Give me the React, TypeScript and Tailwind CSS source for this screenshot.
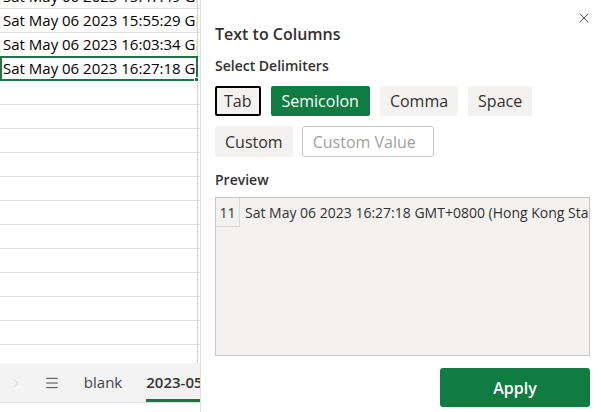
import { X, ChevronRight, Menu } from 'lucide-react';

const rows = [
  'Sat May 06 2023 15:47:49 GMT+0800 (Hong Kong Standard Time)',
  'Sat May 06 2023 15:55:29 GMT+0800 (Hong Kong Standard Time)',
  'Sat May 06 2023 16:03:34 GMT+0800 (Hong Kong Standard Time)',
  'Sat May 06 2023 16:27:18 GMT+0800 (Hong Kong Standard Time)',
  '', '', '', '', '', '', '', '', '', '', '', '',
];

const delimiters = ['Tab', 'Semicolon', 'Comma', 'Space'];

export default function App() {
  return (
    <div className="flex h-[412px] w-[601px] overflow-hidden bg-white text-[#323130] font-['Open_Sans',sans-serif]">
      {/* sheet */}
      <div className="flex w-[200px] shrink-0 flex-col">
        <div className="flex-1 overflow-hidden">
          <div className="-mt-[15px]">
            {rows.map((text, i) => (
              <div key={i} className="flex h-[24px] border-b border-[#e1e1e1]">
                <div
                  className={
                    i === 3
                      ? 'relative w-[198px] border-2 border-[#217346] -mt-px h-[25px] pl-[1px] whitespace-nowrap text-[15px] leading-[21px] text-black'
                      : 'w-[198px] border-r border-[#d4d4d4] pl-[3px] overflow-hidden whitespace-nowrap text-[15px] leading-[23px] text-black'
                  }
                >
                  <div className="overflow-hidden">{text}</div>
                  {i === 3 && (
                    <span className="absolute -right-[3px] -bottom-[3px] h-[5px] w-[5px] bg-[#217346] border border-white" />
                  )}
                </div>
              </div>
            ))}
          </div>
        </div>
        <div className="flex h-[40px] items-center bg-[#f3f3f3] border-b border-[#e1e1e1] text-[15px]">
          <ChevronRight className="ml-[9px] h-[14px] w-[14px] text-[#c8c8c8]" strokeWidth={1.5} />
          <Menu className="ml-[21px] h-[16px] w-[16px] text-[#444]" strokeWidth={1.5} />
          <span className="ml-[24px] text-[#444]">blank</span>
          <span className="ml-[24px] h-full flex items-center border-b-[3px] border-[#217346] pt-[3px] font-semibold text-[#333] whitespace-nowrap overflow-hidden w-[54px]">2023-05</span>
        </div>
        <div className="h-[9px]" />
      </div>

      {/* panel */}
      <div className="relative flex min-w-0 flex-1 flex-col border-l border-[#e1e1e1] pl-[14px] pr-[11px]">
        <button className="absolute right-[9px] top-[10px] text-[#323130]">
          <X className="h-[16px] w-[16px]" strokeWidth={1.25} />
        </button>
        <h2 className="mt-[23px] text-[16px] font-semibold leading-[22px]">Text to Columns</h2>
        <div className="mt-[11px] text-[14px] font-semibold leading-[20px]">Select Delimiters</div>
        <div className="mt-[10px] flex gap-[10px]">
          {delimiters.map((d) => (
            <button
              key={d}
              className={
                d === 'Tab'
                  ? 'h-[30px] rounded-[2px] border-2 border-black bg-[#f3f2f1] px-[7px] text-[16px]'
                  : d === 'Semicolon'
                    ? 'h-[30px] rounded-[2px] bg-[#107c41] px-[11px] text-[16px] text-white'
                    : 'h-[30px] rounded-[2px] bg-[#f3f2f1] px-[10px] text-[16px]'
              }
            >
              {d}
            </button>
          ))}
        </div>
        <div className="mt-[10px] flex gap-[9px]">
          <button className="h-[31px] rounded-[2px] bg-[#f3f2f1] px-[10px] text-[16px]">Custom</button>
          <input
            placeholder="Custom Value"
            className="h-[31px] w-[132px] rounded-[3px] border border-[#c8c6c4] px-[10px] text-[16px] placeholder:text-[#a19f9d] outline-none"
          />
        </div>
        <div className="mt-[13px] text-[14px] font-semibold leading-[20px]">Preview</div>
        <div className="mt-[7px] h-[159px] overflow-hidden border border-[#c8c6c4] bg-[#f3f2f1]">
          <div className="flex h-[29px] items-center">
            <div className="flex h-full w-[24px] shrink-0 items-center justify-center border-r border-b border-[#d8d8d8] text-[14px]">11</div>
            <div className="pl-[5px] whitespace-nowrap text-[14px]">Sat May 06 2023 16:27:18 GMT+0800 (Hong Kong Standard Time)</div>
          </div>
        </div>
        <div className="mt-[12px] flex justify-end">
          <button className="h-[39px] w-[150px] rounded-[3px] bg-[#107c41] text-[16px] font-semibold text-white">Apply</button>
        </div>
      </div>
    </div>
  );
}
